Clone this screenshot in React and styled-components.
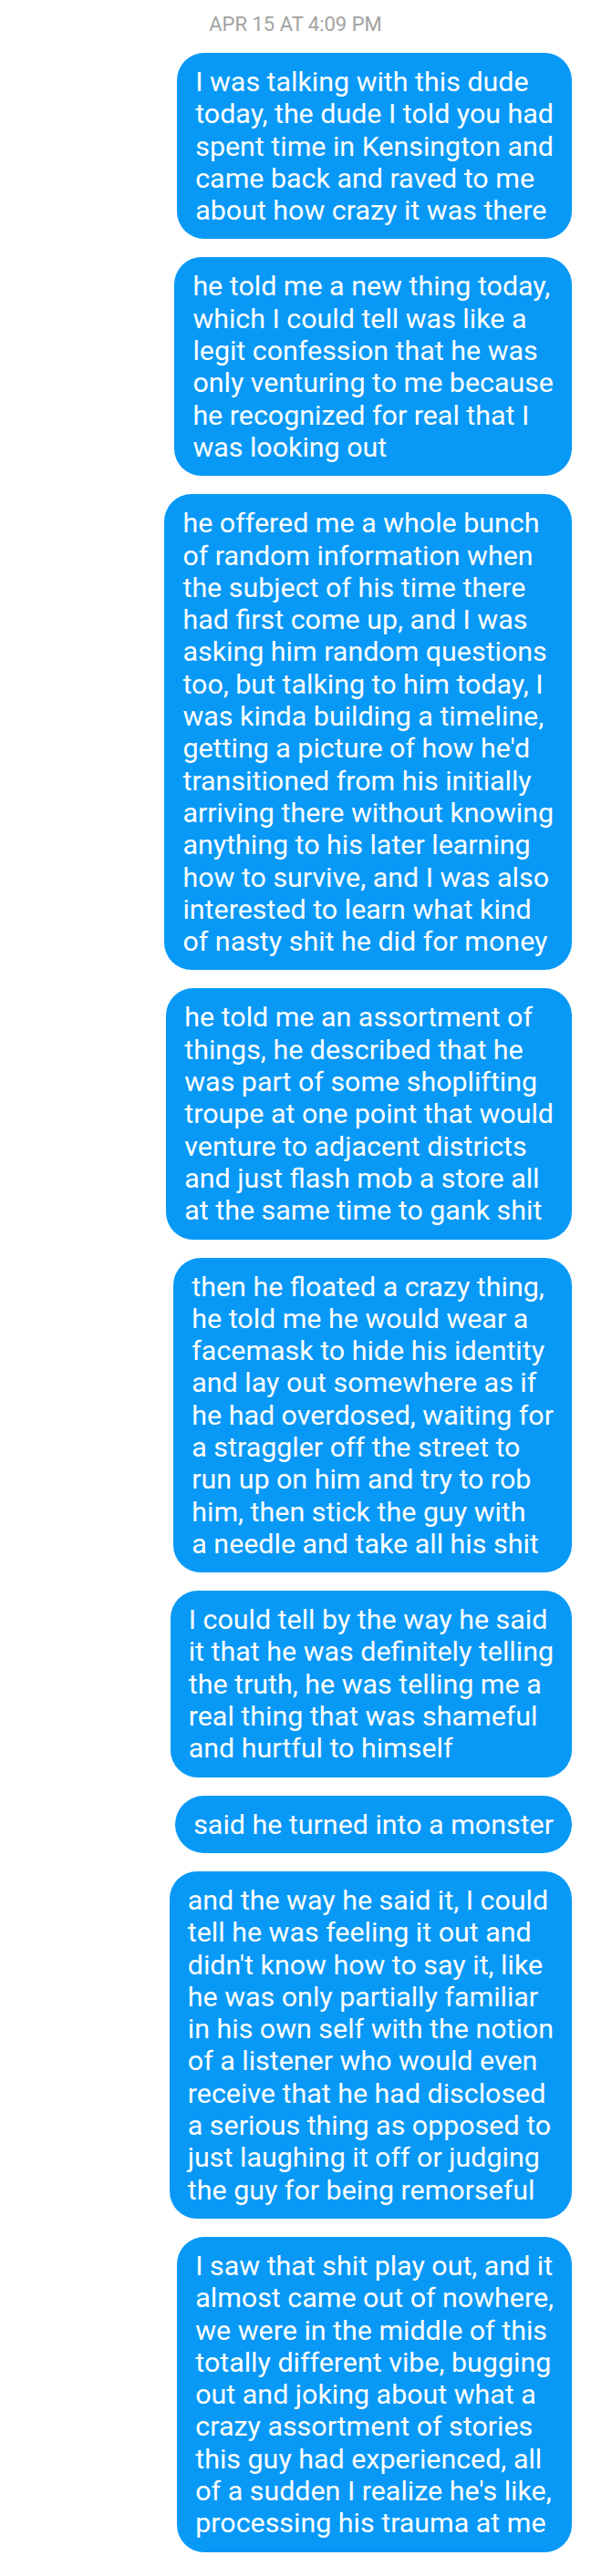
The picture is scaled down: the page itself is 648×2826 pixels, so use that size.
import styled, { createGlobalStyle } from "styled-components";

const GlobalStyle = createGlobalStyle`
  body {
    margin: 0;
    background: #ffffff;
    font-family: Roboto, "Liberation Sans", sans-serif;
  }
`;

const Thread = styled.div`
  display: flex;
  flex-direction: column;
  align-items: flex-end;
  gap: 20px;
  padding: 14px 21px 22px 0;
`;

const Timestamp = styled.div`
  align-self: center;
  margin: 0 0 -2px 0;
  padding-left: 21px;
  font-size: 22px;
  line-height: 26px;
  color: #a2a2a2;
`;

const Bubble = styled.div`
  background: #0899f6;
  color: #ffffff;
  font-size: 30.4px;
  line-height: 35.3px;
  padding: 14px 20px;
  border-radius: ${(props) => (props.single ? "32px" : "30px")};
  white-space: nowrap;
`;

const Line = styled.span`
  display: block;
`;

const messages = [
  [
    "I was talking with this dude",
    "today, the dude I told you had",
    "spent time in Kensington and",
    "came back and raved to me",
    "about how crazy it was there",
  ],
  [
    "he told me a new thing today,",
    "which I could tell was like a",
    "legit confession that he was",
    "only venturing to me because",
    "he recognized for real that I",
    "was looking out",
  ],
  [
    "he offered me a whole bunch",
    "of random information when",
    "the subject of his time there",
    "had first come up, and I was",
    "asking him random questions",
    "too, but talking to him today, I",
    "was kinda building a timeline,",
    "getting a picture of how he'd",
    "transitioned from his initially",
    "arriving there without knowing",
    "anything to his later learning",
    "how to survive, and I was also",
    "interested to learn what kind",
    "of nasty shit he did for money",
  ],
  [
    "he told me an assortment of",
    "things, he described that he",
    "was part of some shoplifting",
    "troupe at one point that would",
    "venture to adjacent districts",
    "and just flash mob a store all",
    "at the same time to gank shit",
  ],
  [
    "then he floated a crazy thing,",
    "he told me he would wear a",
    "facemask to hide his identity",
    "and lay out somewhere as if",
    "he had overdosed, waiting for",
    "a straggler off the street to",
    "run up on him and try to rob",
    "him, then stick the guy with",
    "a needle and take all his shit",
  ],
  [
    "I could tell by the way he said",
    "it that he was definitely telling",
    "the truth, he was telling me a",
    "real thing that was shameful",
    "and hurtful to himself",
  ],
  ["said he turned into a monster"],
  [
    "and the way he said it, I could",
    "tell he was feeling it out and",
    "didn't know how to say it, like",
    "he was only partially familiar",
    "in his own self with the notion",
    "of a listener who would even",
    "receive that he had disclosed",
    "a serious thing as opposed to",
    "just laughing it off or judging",
    "the guy for being remorseful",
  ],
  [
    "I saw that shit play out, and it",
    "almost came out of nowhere,",
    "we were in the middle of this",
    "totally different vibe, bugging",
    "out and joking about what a",
    "crazy assortment of stories",
    "this guy had experienced, all",
    "of a sudden I realize he's like,",
    "processing his trauma at me",
  ],
];

export default function App() {
  return (
    <>
      <GlobalStyle />
      <Thread>
        <Timestamp>APR 15 AT 4:09 PM</Timestamp>
        {messages.map((lines, i) => (
          <Bubble key={i} single={lines.length === 1}>
            {lines.map((line, j) => (
              <Line key={j}>{line}</Line>
            ))}
          </Bubble>
        ))}
      </Thread>
    </>
  );
}
